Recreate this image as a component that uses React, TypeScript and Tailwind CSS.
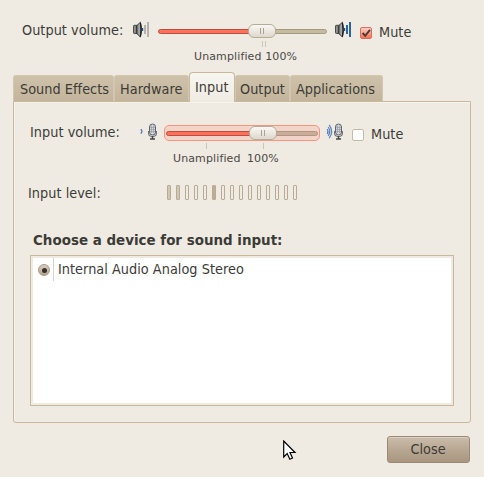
import React from "react";

function Speaker({ muted }: { muted: boolean }) {
  const bar = muted ? "#b5b2ab" : "#2a6599";
  return (
    <svg width="18" height="18" viewBox="0 0 18 18" className="block shrink-0">
      <defs>
        <linearGradient id="cone" x1="0" x2="1">
          <stop offset="0" stopColor="#4a4c49" />
          <stop offset="0.55" stopColor="#b9bbb6" />
          <stop offset="1" stopColor="#3a3d3c" />
        </linearGradient>
      </defs>
      <rect x=".5" y="4.3" width="4" height="8.2" rx=".8" fill="#7b7e79" stroke="#4a4c4a" />
      <path d="M1.8 5.5V11.5" stroke="#a4a7a2" strokeWidth=".8" />
      <path d="M3.6 4.8L7.4 1.2Q9.2 8.7 7.4 16L3.6 12.4Z" fill="url(#cone)" stroke="#2e3234" strokeWidth=".9" />
      <path d="M7.4 2Q9.2 8.7 7.4 15.6" fill="none" stroke="#1c1e1f" strokeWidth="1.2" />
      <rect x="8.5" y="7" width="1.7" height="3" fill="#204a87" />
      <rect x="11" y="4" width="2" height="9" fill={bar} />
      <rect x="14" y="1" width="2" height="15" fill={bar} />
    </svg>
  );
}

function Mic({ loud }: { loud: boolean }) {
  return (
    <svg width="18" height="18" viewBox="0 0 18 18" className="block shrink-0">
      {loud ? (
        <g fill="none" stroke="#5b82bb" strokeWidth="1.2">
          <path d="M1.2 6Q2.8 8.5 1.2 11" />
          <path d="M2.2 4Q5.2 8.5 2.2 13" />
          <path d="M3.2 1.8Q8 8.5 3.2 15.2" />
        </g>
      ) : (
        <path d="M.8 6.2Q3 8.5 .8 10.6" fill="none" stroke="#4f78b4" strokeWidth="1.3" />
      )}
      <path d="M8.6 8V10.3Q8.6 13.5 12.5 13.5T16.4 10.3V8" fill="none" stroke="#70737a" strokeWidth="1.2" />
      <rect x="9.5" y="1" width="6" height="11" rx="3" fill="#d5d9df" stroke="#60636a" />
      <path d="M11.5 2.5V10M13.5 2.5V10M10 4.5H15M10 6.5H15M10 8.5H15" stroke="#979da8" strokeWidth=".7" />
      <path d="M12.5 13V15.7M10 16H15" stroke="#454744" strokeWidth="1.5" />
    </svg>
  );
}

function Thumb() {
  return (
    <div className="flex h-[14px] w-[28px] items-center justify-center gap-[2px] rounded-[6px] border border-[#b5ab98] bg-linear-to-b from-[#faf8f4] to-[#ded8cd]">
      <i className="h-[6px] w-px bg-[#aaa295]" />
      <i className="h-[6px] w-px bg-[#aaa295]" />
    </div>
  );
}

const label = "whitespace-nowrap text-[14.3px] leading-[18px] tracking-[0.04px]";
const small = "whitespace-nowrap font-['DejaVu_Sans',sans-serif] [font-stretch:normal] text-[11px] leading-[13px] text-[#4b4844] tracking-[0.12px]";

function Tab({ text, cls }: { text: string; cls: string }) {
  return (
    <div className={`h-[26px] rounded-t-[3px] border border-b-0 border-[#d2c6b0] bg-linear-to-b from-[#cfc2aa] to-[#c3b59c] pt-[4px] ${cls}`}>
      <div className={label}>{text}</div>
    </div>
  );
}

export default function App() {
  return (
    <main className="relative h-[477px] w-[484px] overflow-hidden bg-[#efebe3] font-['DejaVu_Sans_Condensed','DejaVu_Sans',sans-serif] text-[#3c3b37] [font-stretch:condensed]">
      <section className="flex h-[72px] items-start pl-[22px]">
        <div className={`mt-[21px] w-[111px] ${label}`}>Output volume:</div>
        <div className="mt-[21px] w-[25px]"><Speaker muted /></div>
        <div className="w-[177px] pt-[24px]">
          <div className="relative flex h-[14px] w-[169px] items-center">
            <div className="h-[5px] w-[95px] rounded-l-full border border-[#bd4d3c] bg-[#ff705b]" />
            <div className="h-[5px] flex-1 rounded-r-full border border-[#a39a82] bg-[#c6baa1]" />
            <div className="absolute top-0 left-[90px]"><Thumb /></div>
          </div>
          <div className="mt-[3px] flex gap-[2px] pl-[104px]">
            <i className="h-[6px] w-px bg-[#cec4b3]" /><i className="h-[6px] w-px bg-[#cec4b3]" />
          </div>
          <div className={`mt-[3px] ml-[36px] ${small}`}>Unamplified 100%</div>
        </div>
        <div className="mt-[21px] w-[25px]"><Speaker muted={false} /></div>
        <div className="mt-[27px] h-[12px] w-[12px] rounded-[2px] border border-[#d96f5e] bg-linear-to-b from-[#ffd0c4] to-[#fb6c54]">
          <svg width="10" height="10" viewBox="0 0 10 10"><path d="M1.6 5L4.2 7.8L9 1.8" fill="none" stroke="#463b36" strokeWidth="1.9" /></svg>
        </div>
        <div className={`mt-[23px] ml-[7px] ${label}`}>Mute</div>
      </section>

      <nav className="flex h-[30px] items-end pl-[13px]">
        <Tab text="Sound Effects" cls="mb-px w-[101px] pl-[6px]" />
        <Tab text="Hardware" cls="mb-px w-[75px] pl-[5px]" />
        <div className="relative z-10 h-[30px] w-[46px] rounded-t-[4px] border border-b-0 border-[#c9b99b] bg-linear-to-b from-[#f8f6f1] to-[#efebe3] pt-[5px] pl-[5px]">
          <div className={label}>Input</div>
        </div>
        <Tab text="Output" cls="mb-px w-[55px] pl-[4px]" />
        <Tab text="Applications" cls="mb-px w-[93px] pl-[5px]" />
      </nav>

      <section className="-mt-px ml-[13px] h-[322px] w-[458px] rounded-b-[3px] border border-[#c9b99b] px-[16px] shadow-[inset_1px_1px_0_#f6f3ec]">
        <div className="flex h-[82px] items-start">
          <div className={`mt-[21px] w-[110px] ${label}`}>Input volume:</div>
          <div className="mt-[21px] w-[24px]"><Mic loud={false} /></div>
          <div className="w-[162px] pt-[23px]">
            <div className="relative flex h-[16px] w-[156px] items-center rounded-[5px] border border-[#f79580] bg-[#f3d4c9] px-px">
              <div className="h-[5px] w-[88px] rounded-l-full border border-[#bd4d3c] bg-[#ff705b]" />
              <div className="h-[5px] flex-1 rounded-r-full border border-[#b09783] bg-[#c9ad99]" />
              <div className="absolute top-0 left-[84px]"><Thumb /></div>
            </div>
            <div className="mt-[2px] flex gap-[56px] pl-[42px]">
              <i className="h-[6px] w-px bg-[#cec4b3]" /><i className="h-[6px] w-px bg-[#cec4b3]" />
            </div>
            <div className={`mt-[3px] ml-[9px] flex ${small}`}>
              <span className="w-[74px]">Unamplified</span><span>100%</span>
            </div>
          </div>
          <div className="mt-[21px] w-[26px]"><Mic loud /></div>
          <div className="mt-[27px] h-[12px] w-[12px] rounded-[2px] border border-[#c6bba6] bg-white" />
          <div className={`mt-[23px] ml-[7px] ${label}`}>Mute</div>
        </div>

        <div className="-ml-[2px] flex h-[46px]">
          <div className={`w-[139px] ${label}`}>Input level:</div>
          <div className="mt-px flex gap-[5px]">
            {Array.from({ length: 15 }, (_, i) => (
              <i key={i} className={`h-[15px] w-[4px] rounded-[1px] border border-[#b9ab91] ${i === 5 ? "bg-[#bfae94]" : i < 2 ? "bg-[#d2c7b7]" : "bg-[#efebe3]"}`} />
            ))}
          </div>
        </div>

        <h2 className="mt-px ml-[3px] h-[24px] pt-px font-['DejaVu_Sans',sans-serif] text-[13.45px] leading-[18px] font-bold whitespace-nowrap [font-stretch:normal]">Choose a device for sound input:</h2>
        <div className="h-[151px] w-[424px] border border-[#c9b99b] bg-[#efebe3] p-[2px]">
          <div className="flex h-full items-start bg-white pl-[5px]">
            <div className="mt-[6px] flex h-[12px] w-[12px] items-center justify-center rounded-full border border-[#a99b89] bg-linear-to-b from-[#d6ccbd] to-[#b5a48e]">
              <i className="h-[5px] w-[5px] rounded-full bg-[#35322e]" />
            </div>
            <i className="ml-[3px] h-[23px] w-px bg-[#d5d3d0]" />
            <div className={`mt-[2px] ml-[4px] ${label}`}>Internal Audio Analog Stereo</div>
          </div>
        </div>
      </section>

      <footer className="flex justify-end pt-[13px] pr-[14px]">
        <button className="h-[27px] w-[83px] rounded-[3px] border border-[#9a8975] bg-linear-to-b from-[#cbbdac] via-[#b8a792] to-[#a8967f] pr-px pb-[2px] text-[14.3px] leading-[18px] tracking-[0.04px] shadow-[inset_0_1px_0_#dbd0c2]">Close</button>
      </footer>

      <svg width="15" height="22" viewBox="0 0 15 22" className="absolute top-[440px] left-[283px]">
        <path d="M.7 1V17L4.2 13.6L6.8 19.2L9.5 18L7 12.5H12Z" fill="#fff" stroke="#000" strokeWidth="1.2" />
      </svg>
    </main>
  );
}
